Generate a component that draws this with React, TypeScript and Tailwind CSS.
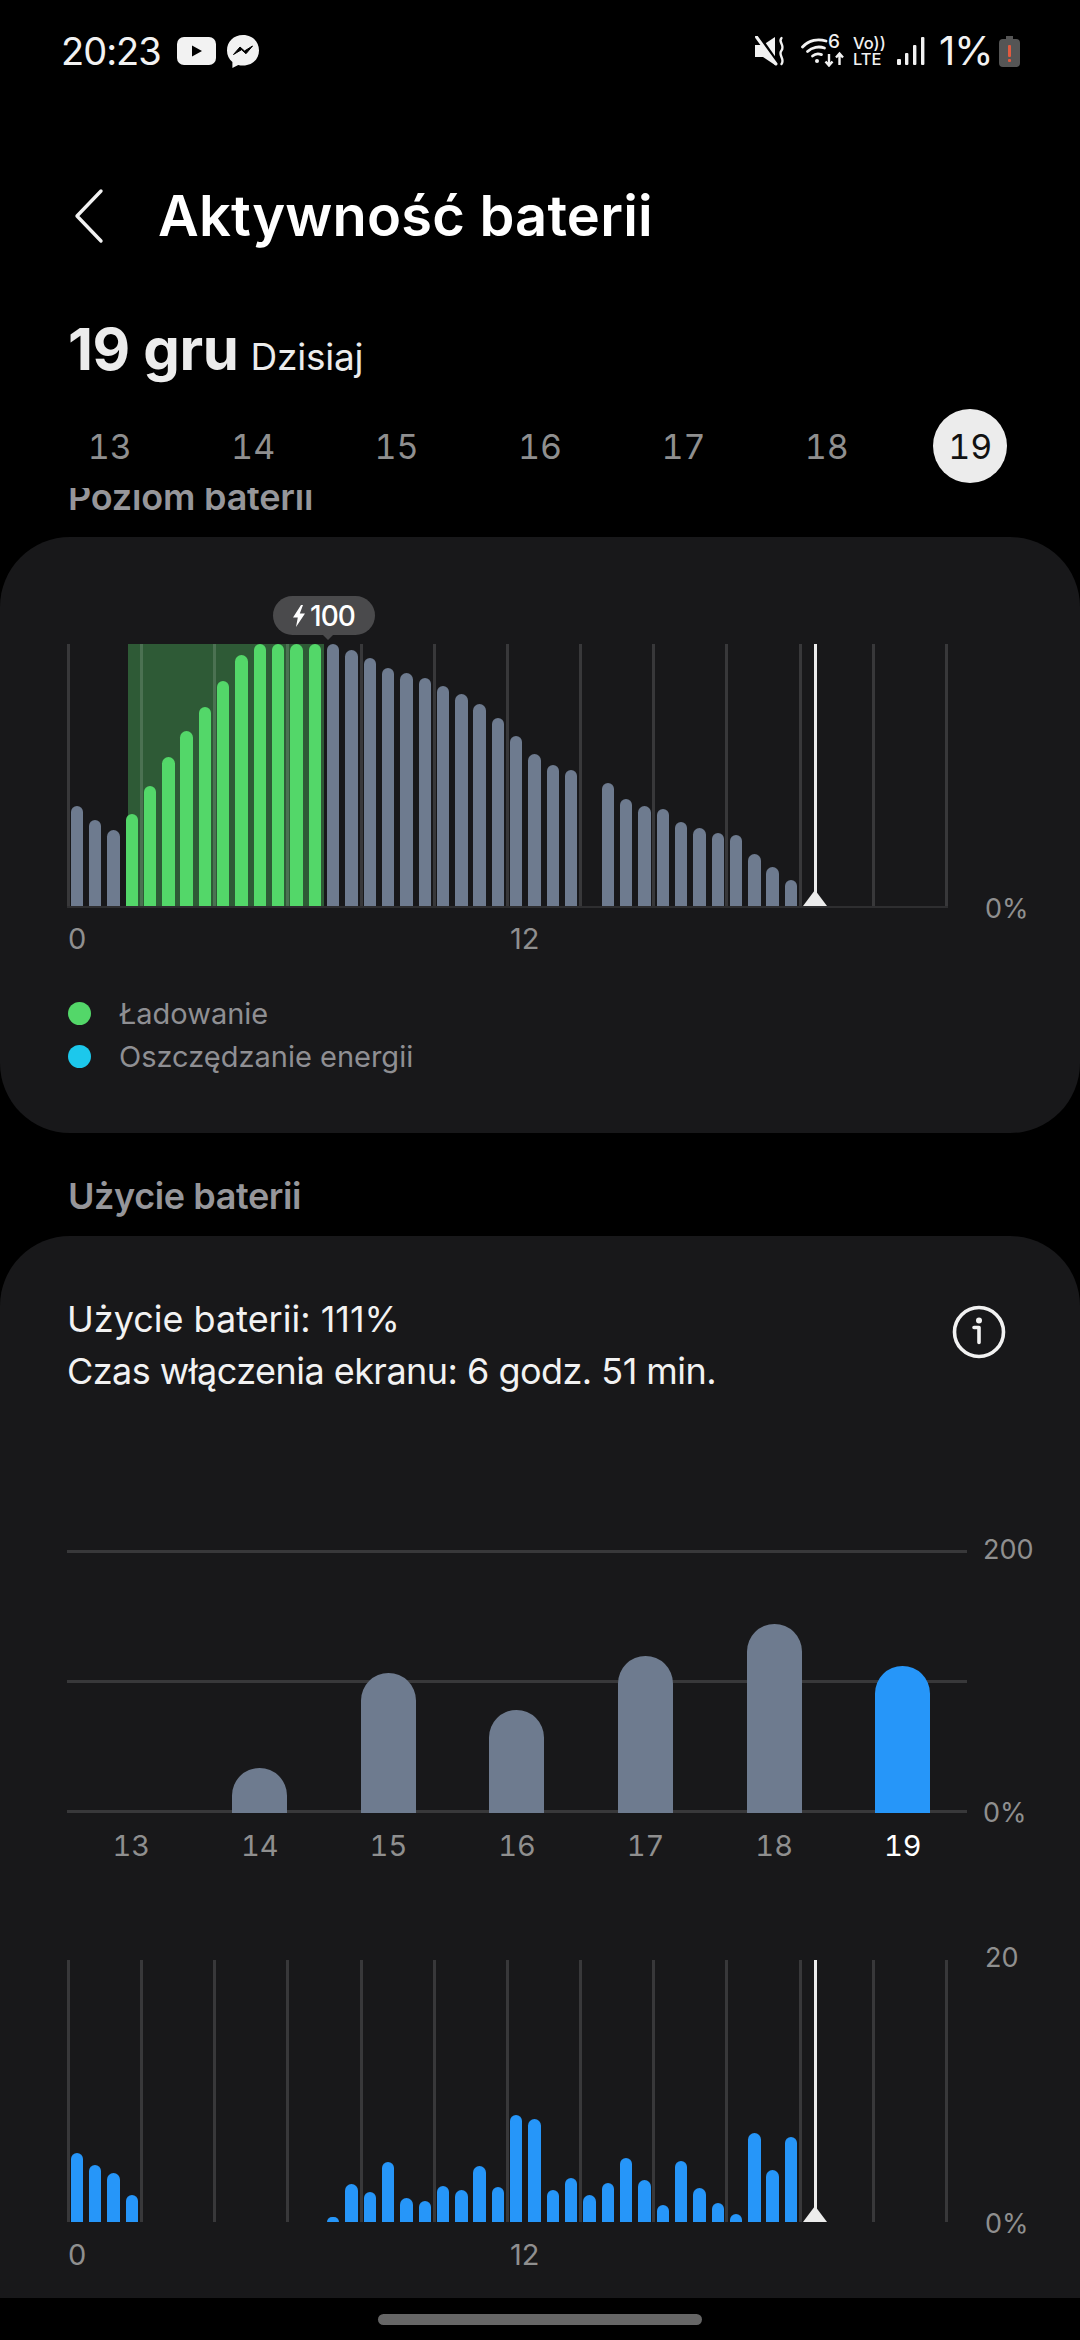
const font = "font-['Inter','Noto_Sans',sans-serif]";

const weekDays = [13, 14, 15, 16, 17, 18, 19];

// heights in px, one entry per half hour slot, 0 = no data
const levelBars = [
  99.7, 86.3, 76, 91.7, 120.3, 149, 175.3, 199, 225, 251.3, 261.7, 261.7, 261.7, 261.7, 261.7, 256.3, 248.3, 238.3,
  233, 227.7, 220, 212, 201.7, 188.3, 170, 151.7, 141.3, 136.3, 0, 123, 107.3, 99.7, 96.7, 83.7, 78.3, 73.3, 70.7,
  52.3, 39, 26,
];

const usageBars = [
  69, 57.3, 49.3, 27, 0, 0, 0, 0, 0, 0, 0, 0, 0, 0, 5.3, 37.7, 29.7, 60, 24.3, 20.7, 36.3, 32.3, 56, 35, 107, 103,
  32.3, 44.3, 27, 39, 63.7, 41.7, 16.7, 61.3, 33.7, 19.3, 7.7, 88.7, 52, 84.7,
];

const weekBars = [0, 45, 140, 103, 157, 189, 147];

function StatusBar() {
  return (
    <div className="flex h-[100px] items-center justify-between pl-[61px] pr-[60px] pt-[2px] text-[#f2f2f2]">
      <div className="flex items-center">
        <span className="w-[104px] text-[38px] tracking-[-1px]">20:23</span>
        <svg width="39" height="28" viewBox="0 0 39 28" className="ml-[12px]">
          <rect width="39" height="28" rx="7" fill="#f2f2f2" />
          <path d="M15 8.5 L25 14 L15 19.5 Z" fill="#000" />
        </svg>
        <svg width="34" height="35" viewBox="0 0 34 35" className="ml-[10px]">
          <path d="M17 1 C7.6 1 1 7.8 1 16.4 C1 21.2 3 25.2 6.4 27.9 L6.4 34 L12.2 30.9 C13.7 31.3 15.3 31.6 17 31.6 C26.4 31.6 33 25 33 16.4 C33 7.8 26.4 1 17 1 Z" fill="#f2f2f2" />
          <path d="M7.5 20.5 L14 13 L18.5 17 L26.5 12 L20 19.7 L15.5 15.7 Z" fill="#000" stroke="#000" strokeWidth="1" strokeLinejoin="round" />
        </svg>
      </div>
      <div className="flex items-center">
        <svg width="30" height="30" viewBox="0 0 30 30">
          <path d="M0 9 H8 L20 1 V29 L8 21 H0 Z" fill="#f2f2f2" />
          <path d="M3 0 L22 27" stroke="#000" strokeWidth="4.5" />
          <path d="M1.5 1 L21 28" stroke="#f2f2f2" strokeWidth="3" strokeLinecap="round" />
          <path d="M26.5 2 C22.5 6 30.5 9 26.5 14.5 C22.5 19 30.5 23 26.5 28" stroke="#f2f2f2" strokeWidth="2.4" fill="none" strokeLinecap="round" />
        </svg>
        <div className="relative ml-[16px] h-[32px] w-[44px]">
          <svg width="44" height="32" viewBox="0 0 44 32">
            <path d="M1.5 12 C8 5 17 3.5 25 6" stroke="#f2f2f2" strokeWidth="2.8" fill="none" strokeLinecap="round" />
            <path d="M6.5 16.5 C11 12 18 11 23.5 13" stroke="#f2f2f2" strokeWidth="2.8" fill="none" strokeLinecap="round" />
            <path d="M11.5 21 C14 18.8 18 18.6 20.5 19.6" stroke="#f2f2f2" strokeWidth="2.8" fill="none" strokeLinecap="round" />
            <circle cx="16" cy="26" r="2" fill="#f2f2f2" />
            <path d="M28 19 V30 M24.5 26.5 L28 30.5 L31.5 26.5" stroke="#f2f2f2" strokeWidth="2.4" fill="none" />
            <path d="M38.5 30 V19 M35 22.5 L38.5 18.5 L42 22.5" stroke="#f2f2f2" strokeWidth="2.4" fill="none" />
          </svg>
          <span className="absolute left-[27px] top-[-3px] text-[19px] font-medium leading-[20px]">6</span>
        </div>
        <div className="ml-[8px] flex w-[32px] flex-col text-[16.5px] font-medium leading-[16px]">
          <span>Vo))</span>
          <span>LTE</span>
        </div>
        <svg width="28" height="30" viewBox="0 0 28 30" className="ml-[12px]">
          <rect x="0" y="23" width="4" height="6" rx="1" fill="#f2f2f2" />
          <rect x="8" y="17" width="3.4" height="12" rx="1" fill="#f2f2f2" />
          <rect x="16" y="9" width="3.4" height="20" rx="1" fill="#f2f2f2" />
          <rect x="24" y="1" width="3.4" height="28" rx="1" fill="#f2f2f2" />
        </svg>
        <span className="ml-[14px] w-[52px] text-[40px] tracking-[-1px]">1%</span>
        <svg width="21" height="31" viewBox="0 0 21 31" className="ml-[8px]">
          <path d="M7 0 H14 V3 H17 Q21 3 21 7 V27 Q21 31 17 31 H4 Q0 31 0 27 V7 Q0 3 4 3 H7 Z" fill="#555" />
          <rect x="9" y="9" width="3" height="12" rx="1" fill="#e25a3f" />
          <rect x="9" y="23" width="3" height="3" rx="1" fill="#e25a3f" />
        </svg>
      </div>
    </div>
  );
}

function Header() {
  return (
    <div className="mt-[80px] flex h-[72px] items-center">
      <svg width="30" height="56" viewBox="0 0 30 56" className="ml-[74px]">
        <path d="M27 3 L3 28 L27 53" stroke="#f2f2f2" strokeWidth="3.4" fill="none" strokeLinecap="round" strokeLinejoin="round" />
      </svg>
      <h1 className="ml-[54px] text-[56px] font-semibold tracking-[0.2px] text-white">Aktywność baterii</h1>
    </div>
  );
}

function DatePicker() {
  return (
    <>
      <div className="mt-[66px] flex h-[62px] items-baseline pl-[68px] text-[#ececec]">
        <span className="text-[58px] font-bold leading-[62px] tracking-[-0.4px]">19 gru</span>
        <span className="ml-[12px] text-[37px] tracking-[-0.2px]">Dzisiaj</span>
      </div>
      <div className="mt-[29px] grid h-[74px] grid-cols-7 pl-[38px] pr-[38px] text-[34px] tabular-nums text-[#8f8f8f]">
        {weekDays.map((d) => (
          <div key={d} className="flex items-center justify-center">
            {d === 19 ? (
              <span className="flex h-[74px] w-[74px] items-center justify-center rounded-full bg-[#ececec] text-[#111]">{d}</span>
            ) : (
              d
            )}
          </div>
        ))}
      </div>
    </>
  );
}

function GridLines() {
  return (
    <div className="absolute inset-0 flex justify-between">
      {Array.from({ length: 13 }, (_, i) => (
        <div key={i} className="h-full w-[3px] bg-white/[0.14]" />
      ))}
    </div>
  );
}

function NowMarker() {
  return (
    <div className="absolute bottom-0 left-[736px] top-0 flex w-[24px] flex-col items-center">
      <div className="w-[3px] flex-1 bg-[#ececec]" />
      <svg width="24" height="16" viewBox="0 0 24 16" className="absolute bottom-0">
        <path d="M12 0 L24 16 H0 Z" fill="#ececec" />
      </svg>
    </div>
  );
}

function HalfHourBars({ bars, color }: { bars: number[]; color: (i: number) => string }) {
  return (
    <div className="relative flex h-full items-end gap-[5.93px] pl-[3.6px]">
      {bars.map((h, i) => (
        <div key={i} className={`w-[12.4px] shrink-0 rounded-t-full ${color(i)}`} style={{ height: h }} />
      ))}
    </div>
  );
}

function HourLabels({ gap }: { gap: string }) {
  return (
    <div className={`flex h-[30px] w-[881px] text-[29px] leading-[30px] text-[#8f8f8f] ${gap}`}>
      <span className="ml-[1px] w-[442px]">0</span>
      <span>12</span>
    </div>
  );
}

function LevelCard() {
  return (
    <div className="h-[596px] rounded-[70px] bg-[#18181a] pl-[67px] pt-[107px]">
      <div className="flex">
        <div className="relative h-[264px] w-[881px] border-b-2 border-[#2e2e30]">
          <div className="absolute bottom-0 left-[61px] top-0 w-[196px] bg-[#2e5a36]" />
          <GridLines />
          <HalfHourBars bars={levelBars} color={(i) => (i >= 3 && i <= 13 ? "bg-[#53d769]" : "bg-[#6e7b8f]")} />
          <NowMarker />
          <div className="absolute left-[206px] top-[-48px] flex h-[39px] w-[102px] items-center justify-center gap-[5px] rounded-full bg-[#4a4a4c] text-[28px] font-medium tracking-[-1px] text-white">
            <svg width="12" height="22" viewBox="0 0 12 22">
              <path d="M8 0 L0 12.5 H4.8 L3 22 L12 8.5 H6.8 L10 0 Z" fill="#fff" />
            </svg>
            100
            <div className="absolute bottom-[-5px] left-[49px] h-0 w-0 border-x-[6px] border-t-[6px] border-x-transparent border-t-[#4a4a4c]" />
          </div>
        </div>
        <span className="mb-[-16px] ml-[37px] self-end text-[27px] leading-[30px] text-[#8f8f8f]">0%</span>
      </div>
      <HourLabels gap="mt-[16px]" />
      <div className="mt-[38px] flex flex-col text-[29px] text-[#8f8f93]">
        <div className="flex h-[43px] items-center">
          <span className="ml-[1px] h-[23px] w-[23px] rounded-full bg-[#53d769]" />
          <span className="ml-[28px]">Ładowanie</span>
        </div>
        <div className="flex h-[43px] items-center">
          <span className="ml-[1px] h-[23px] w-[23px] rounded-full bg-[#1cc8ec]" />
          <span className="ml-[28px]">Oszczędzanie energii</span>
        </div>
      </div>
    </div>
  );
}

function WeekChart() {
  return (
    <>
      <div className="flex">
        <div className="relative h-[263px] w-[900px]">
          <div className="absolute inset-0 flex flex-col justify-between">
            <div className="h-[3px] bg-white/[0.14]" />
            <div className="h-[3px] bg-white/[0.14]" />
            <div className="h-[3px] bg-white/[0.14]" />
          </div>
          <div className="relative grid h-full grid-cols-7 items-end">
            {weekBars.map((h, i) => (
              <div
                key={i}
                className={`mx-auto w-[55px] rounded-t-full ${i === 6 ? "bg-[#2696f9]" : "bg-[#6e7b8f]"}`}
                style={{ height: h }}
              />
            ))}
          </div>
        </div>
        <div className="my-[-15px] ml-[16px] flex flex-col justify-between text-[27px] leading-[30px] text-[#8f8f8f]">
          <span>200</span>
          <span>0%</span>
        </div>
      </div>
      <div className="mt-[17px] grid w-[900px] grid-cols-7 text-center text-[29px] leading-[32px] tabular-nums text-[#8f8f8f]">
        {weekDays.map((d) => (
          <span key={d} className={d === 19 ? "text-white" : ""}>
            {d}
          </span>
        ))}
      </div>
    </>
  );
}

function UsageCard() {
  return (
    <div className="h-[1062px] rounded-t-[70px] bg-[#18181a] pl-[67px] pt-[57px]">
      <div className="flex items-start">
        <div className="w-[885px] text-[36px] leading-[52px] text-[#f2f2f2]">
          <p>Użycie baterii: 111%</p>
          <p className="tracking-[-0.53px]">Czas włączenia ekranu: 6 godz. 51 min.</p>
        </div>
        <svg width="54" height="54" viewBox="0 0 54 54" className="mt-[12px]">
          <circle cx="27" cy="27" r="24.5" stroke="#f2f2f2" strokeWidth="3.6" fill="none" />
          <circle cx="27" cy="15.5" r="3" fill="#f2f2f2" />
          <path d="M22 22.5 H27 V37.5" stroke="#f2f2f2" strokeWidth="3.6" fill="none" strokeLinecap="round" strokeLinejoin="round" />
        </svg>
      </div>
      <div className="mt-[153px]">
        <WeekChart />
      </div>
      <div className="mt-[98px] flex">
        <div className="relative h-[262px] w-[881px]">
          <GridLines />
          <HalfHourBars bars={usageBars} color={() => "bg-[#2696f9]"} />
          <NowMarker />
        </div>
        <div className="my-[-17px] ml-[37px] flex flex-col justify-between text-[27px] leading-[30px] text-[#8f8f8f]">
          <span>20</span>
          <span>0%</span>
        </div>
      </div>
      <HourLabels gap="mt-[18px]" />
    </div>
  );
}

export default function App() {
  return (
    <div className={`flex h-[2340px] w-[1080px] flex-col overflow-hidden bg-black ${font}`}>
      <StatusBar />
      <Header />
      <DatePicker />
      {/* list scrolled under the date row, so the heading is cut at its top */}
      <div className="mt-[5px] h-[49px] overflow-hidden pl-[68px] text-[36px] font-semibold leading-[40px] tracking-[-0.2px] text-[#96969a]">
        <span className="mt-[-11px] block">Poziom baterii</span>
      </div>
      <LevelCard />
      <div className="flex h-[103px] items-end pb-[13px] pl-[68px] text-[36px] font-semibold tracking-[-0.4px] text-[#96969a]">
        Użycie baterii
      </div>
      <UsageCard />
      <div className="flex flex-1 items-start justify-center pt-[16px]">
        <div className="h-[11px] w-[324px] rounded-full bg-[#666]" />
      </div>
    </div>
  );
}
